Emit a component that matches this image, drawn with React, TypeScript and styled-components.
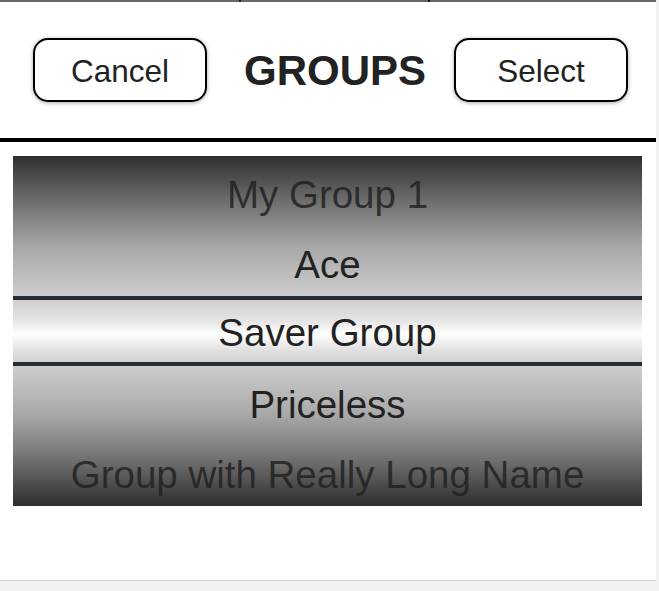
import React from "react";
import styled, { createGlobalStyle } from "styled-components";

const Global = createGlobalStyle`
  html, body { margin: 0; padding: 0; background: #f2f2f2; }
  body { font-family: "Liberation Sans", Arial, sans-serif; }
  * { box-sizing: border-box; }
`;

const Panel = styled.div`
  width: 656px;
  height: 581px;
  background: #ffffff;
  border-bottom: 1px solid #cccccc;
  display: flex;
  flex-direction: column;
`;

const TopStrip = styled.div`
  height: 2px;
  background: #666666;
  display: flex;
`;

const Tick = styled.div<{ $offset: number }>`
  width: 2px;
  height: 2px;
  background: #1e1e1e;
  margin-left: ${(p) => p.$offset}px;
`;

const Header = styled.div`
  height: 136px;
  display: flex;
  align-items: center;
  justify-content: space-between;
  padding: 0 28px 0 33px;
`;

const Button = styled.button`
  width: 174px;
  height: 64px;
  border: 2px solid #000;
  border-radius: 15px;
  background: #fff;
  box-shadow: 0 1px 4px rgba(0, 0, 0, 0.35);
  font-family: "Liberation Sans", Arial, sans-serif;
  font-size: 31.5px;
  color: #222;
  padding: 3px 0 0 0;
  display: flex;
  align-items: center;
  justify-content: center;
`;

const Title = styled.h1`
  margin: 0 0 0 9px;
  padding-top: 2px;
  font-size: 42px;
  font-weight: bold;
  color: #222;
  font-family: "Liberation Sans", Arial, sans-serif;
`;

const Divider = styled.div`
  height: 4px;
  background: #000;
`;

const Content = styled.div`
  padding: 14px 14px 0 13px;
`;

const Picker = styled.div`
  display: flex;
  flex-direction: column;
  height: 350px;
`;

const Shade = styled.div<{ $dir: "top" | "bottom" }>`
  display: flex;
  flex-direction: column;
  background: linear-gradient(
    ${(p) => (p.$dir === "top" ? "to bottom" : "to top")},
    #2e2e2e 0%,
    #6a6a6a 30%,
    #a8a8a8 65%,
    #cdcdcd 100%
  );
`;

const Row = styled.div<{ $dim?: boolean }>`
  height: 70px;
  display: flex;
  align-items: center;
  justify-content: center;
  padding-top: 7px;
  font-size: 38.5px;
  color: ${(p) => (p.$dim ? "rgba(34,34,34,0.85)" : "#222")};
  white-space: nowrap;
`;

const Selected = styled.div`
  height: 70px;
  border-top: 4px solid #262d32;
  border-bottom: 4px solid #262d32;
  background: linear-gradient(
    to bottom,
    #cfcfcf 0%,
    #e6e6e6 35%,
    #ffffff 55%,
    #e2e2e2 80%,
    #d0d0d0 100%
  );
  display: flex;
  align-items: center;
  justify-content: center;
  padding-top: 3px;
  font-size: 38.5px;
  color: #222;
`;

export default function App() {
  return (
    <>
      <Global />
      <Panel>
        <TopStrip>
          <Tick $offset={239} />
          <Tick $offset={187} />
        </TopStrip>
        <Header>
          <Button>Cancel</Button>
          <Title>GROUPS</Title>
          <Button>Select</Button>
        </Header>
        <Divider />
        <Content>
          <Picker>
            <Shade $dir="top">
              <Row $dim>My Group 1</Row>
              <Row>Ace</Row>
            </Shade>
            <Selected>Saver Group</Selected>
            <Shade $dir="bottom">
              <Row>Priceless</Row>
              <Row $dim>Group with Really Long Name</Row>
            </Shade>
          </Picker>
        </Content>
      </Panel>
    </>
  );
}
